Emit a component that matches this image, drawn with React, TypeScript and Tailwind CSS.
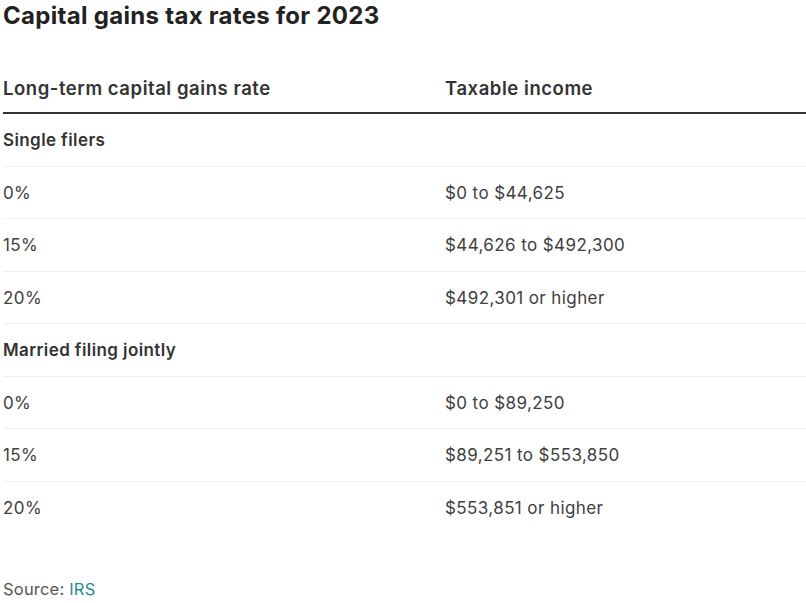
const groups = [
  {
    label: "Single filers",
    rows: [
      ["0%", "$0 to $44,625"],
      ["15%", "$44,626 to $492,300"],
      ["20%", "$492,301 or higher"],
    ],
  },
  {
    label: "Married filing jointly",
    rows: [
      ["0%", "$0 to $89,250"],
      ["15%", "$89,251 to $553,850"],
      ["20%", "$553,851 or higher"],
    ],
  },
]

export default function App() {
  return (
    <div className="w-[806px] h-[603px] bg-white pl-[3px] font-['Inter',sans-serif] text-[#333]">
      <h1 className="h-[32px] text-[24px] leading-[32px] tracking-[0.3px] font-bold text-[#222]">
        Capital gains tax rates for 2023
      </h1>

      <div className="mt-[44px]">
        {/* Header */}
        <div className="flex h-[38px] items-center pb-[10px] border-b-2 border-[#333] text-[18.5px] tracking-[0.55px] font-semibold">
          <div className="w-[442px]">Long-term capital gains rate</div>
          <div>Taxable income</div>
        </div>

        {groups.map((g, gi) => (
          <div key={gi}>
            <div className="flex h-[52.5px] items-center pt-[2px] border-b border-[#efefef] text-[17px] tracking-[0.4px] font-semibold">
              {g.label}
            </div>
            {g.rows.map((r, ri) => (
              <div
                key={ri}
                className={`flex h-[52.5px] items-center pt-[2px] text-[17px] tracking-[0.4px] text-[#404040] ${
                  gi === groups.length - 1 && ri === g.rows.length - 1 ? "" : "border-b border-[#efefef]"
                }`}
              >
                <div className="w-[442px]">{r[0]}</div>
                <div>{r[1]}</div>
              </div>
            ))}
          </div>
        ))}
      </div>

      <p className="mt-[43px] text-[16.5px] leading-[24px] tracking-[0.2px] text-[#555]">
        Source: <a className="text-[#2a8a96]">IRS</a>
      </p>
    </div>
  )
}
